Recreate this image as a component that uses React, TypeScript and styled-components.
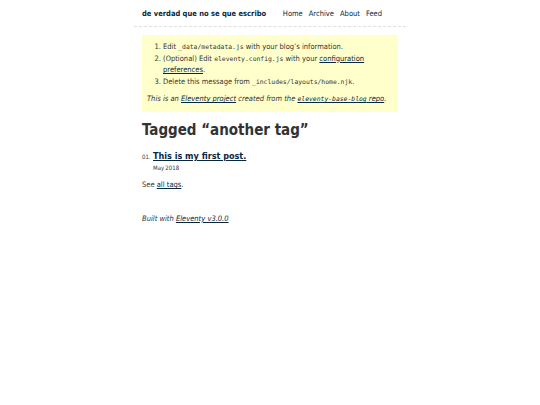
import styled, { createGlobalStyle } from "styled-components";

const GlobalStyle = createGlobalStyle`
  html, body {
    margin: 0;
    padding: 0;
    background: #fff;
  }
  body {
    font-family: "DejaVu Sans Condensed", "DejaVu Sans", sans-serif;
    font-stretch: condensed;
    font-size: 7.5px;
    line-height: 1.5;
    color: #333;
  }
`;

const Page = styled.div`
  max-width: 272px;
  margin: 0 auto;
`;

const Header = styled.header`
  display: flex;
  align-items: center;
  justify-content: space-between;
  gap: 8px;
  padding: 8px 8px 7px;
  border-bottom: 1px dashed #e0e0e0;
`;

const HomeLink = styled.a`
  flex-grow: 1;
  font-weight: 700;
  color: #082840;
  text-decoration: none;
`;

const Nav = styled.ul`
  display: flex;
  gap: 6px;
  margin: 0 16px 0 0;
  padding: 0;
  list-style: none;
`;

const NavLink = styled.a`
  color: #082840;
  text-decoration: none;
`;

const Main = styled.main`
  padding: 8px;
`;

const MessageBox = styled.div`
  background: #ffffcc;
  padding: 6px 5px 7px;
  color: #333;
`;

const Steps = styled.ol`
  margin: 0 0 6px;
  padding-left: 16px;
`;

const Code = styled.code`
  font-family: "DejaVu Sans Mono", monospace;
  font-stretch: normal;
  font-size: 6.4px;
`;

const Link = styled.a`
  color: #082840;
  text-decoration: underline;
  text-decoration-thickness: 1px;
`;

const Note = styled.p`
  margin: 0;
  font-style: italic;
`;

const Title = styled.h1`
  font-size: 15px;
  font-weight: 700;
  line-height: 1.2;
  margin: 9px 0 11px;
`;

const PostList = styled.ol`
  list-style: none;
  margin: 0 0 7px;
  padding: 0 0 0 11px;
`;

const PostItem = styled.li`
  display: flex;
  flex-wrap: wrap;
  align-items: baseline;
`;

const Index = styled.span`
  font-size: 6px;
  margin-left: -11px;
  width: 11px;
`;

const PostLink = styled.a`
  font-size: 9px;
  font-weight: 700;
  color: #082840;
  text-decoration: underline;
  text-decoration-thickness: 1px;
  flex-basis: calc(100% - 12px);
`;

const PostDate = styled.time`
  font-size: 6px;
  word-spacing: -0.5px;
`;

const Text = styled.p`
  margin: 0;
`;

const Footer = styled.footer`
  padding: 8px 8px;
  margin-top: 6px;
  font-style: italic;
`;

export default function App() {
  return (
    <>
      <GlobalStyle />
      <Page>
        <Header>
          <HomeLink href="#">de verdad que no se que escribo</HomeLink>
          <Nav>
            <li><NavLink href="#">Home</NavLink></li>
            <li><NavLink href="#">Archive</NavLink></li>
            <li><NavLink href="#">About</NavLink></li>
            <li><NavLink href="#">Feed</NavLink></li>
          </Nav>
        </Header>
        <Main>
          <MessageBox>
            <Steps>
              <li>
                Edit <Code>_data/metadata.js</Code> with your blog’s information.
              </li>
              <li>
                (Optional) Edit <Code>eleventy.config.js</Code> with your{" "}
                <Link href="#">configuration preferences</Link>.
              </li>
              <li>
                Delete this message from <Code>_includes/layouts/home.njk</Code>.
              </li>
            </Steps>
            <Note>
              This is an <Link href="#">Eleventy project</Link> created from the{" "}
              <Link href="#">
                <Code>eleventy-base-blog</Code> repo
              </Link>
              .
            </Note>
          </MessageBox>
          <Title>Tagged “another tag”</Title>
          <PostList>
            <PostItem>
              <Index>01.</Index>
              <PostLink href="#">This is my first post.</PostLink>
              <PostDate>May 2018</PostDate>
            </PostItem>
          </PostList>
          <Text>
            See <Link href="#">all tags</Link>.
          </Text>
        </Main>
        <Footer>
          Built with <Link href="#">Eleventy v3.0.0</Link>
        </Footer>
      </Page>
    </>
  );
}
